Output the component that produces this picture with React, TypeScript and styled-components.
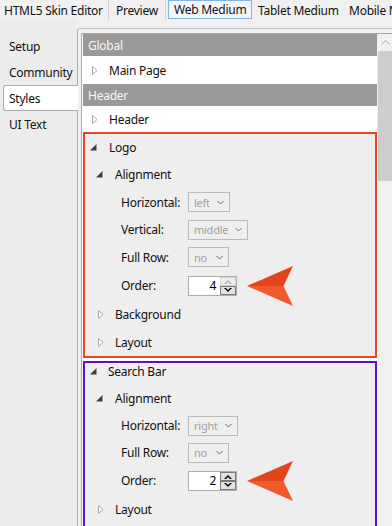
import styled, { createGlobalStyle } from "styled-components";

const GlobalStyle = createGlobalStyle`
  html, body {
    margin: 0;
    padding: 0;
    overflow: hidden;
    background: #f0f0f0;
  }
  body {
    font-family: "Noto Sans", "Open Sans", sans-serif;
    font-size: 12px;
    letter-spacing: -0.25px;
    color: #111;
  }
`;

const Window = styled.div`
    width: 392px;
    height: 526px;
    overflow: hidden;
    display: flex;
    flex-direction: column;
    background: #f0f0f0;
`;

const TopBar = styled.div`
    display: flex;
    height: 20px;
    flex: none;
`;

const TopItem = styled.div<{ $w: number; $pl: number; $sep?: boolean; $active?: boolean }>`
    width: ${(p) => p.$w}px;
    flex: none;
    box-sizing: border-box;
    padding-left: ${(p) => p.$pl}px;
    display: flex;
    align-items: center;
    white-space: nowrap;
    overflow: hidden;
    border-right: ${(p) => (p.$sep ? "1px solid #d2d2d2" : "none")};
    border: ${(p) => (p.$active ? "1px solid #7eb4ea" : undefined)};
    background: ${(p) => (p.$active ? "#f3f7fb" : "transparent")};
    margin-left: ${(p) => (p.$active ? "2px" : "0")};
    height: ${(p) => (p.$active ? "19px" : "20px")};
`;

const Body = styled.div`
    display: flex;
    flex: 1;
    min-height: 0;
`;

const SideTabs = styled.div`
    width: 77px;
    flex: none;
    padding-top: 13px;
    display: flex;
    flex-direction: column;
    background: #ececec;
`;

const SideTab = styled.div<{ $active?: boolean }>`
    height: 26px;
    box-sizing: border-box;
    display: flex;
    align-items: center;
    padding-left: ${(p) => (p.$active ? "5px" : "9px")};
    margin-left: ${(p) => (p.$active ? "3px" : "0")};
    margin-right: ${(p) => (p.$active ? "-1px" : "0")};
    background: ${(p) => (p.$active ? "#fff" : "transparent")};
    border: ${(p) => (p.$active ? "1px solid #acacac" : "none")};
    border-right: none;
    border-radius: 3px 0 0 3px;
    position: relative;
    z-index: 1;
`;

const Frame = styled.div`
    margin-top: 8px;
    flex: 1;
    display: flex;
    border-top: 1px solid #c4c4c4;
    border-left: 1px solid #acacac;
    border-top-left-radius: 3px;
    padding: 4px 0 0 3px;
    background: #f0f0f0;
`;

const List = styled.div`
    display: flex;
    flex: 1;
    border-top: 1px solid #a8a8a8;
    border-left: 1px solid #a8a8a8;
    padding-left: 1px;
    background: #fff;
    overflow: hidden;
`;

const Items = styled.div`
    width: 294px;
    flex: none;
    display: flex;
    flex-direction: column;
    background: #fff;
`;

const GroupHeader = styled.div`
    height: 22px;
    flex: none;
    display: flex;
    align-items: center;
    padding-left: 5px;
    background: #999;
    color: #f7f7f7;
`;

const TreeRow = styled.div<{ $h: number; $tx: number; $pb?: number }>`
    height: ${(p) => p.$h}px;
    flex: none;
    box-sizing: border-box;
    display: flex;
    align-items: center;
    padding-left: ${(p) => p.$tx}px;
    padding-bottom: ${(p) => p.$pb ?? 0}px;
`;

const Twisty = styled.div<{ $w: number }>`
    width: ${(p) => p.$w}px;
    flex: none;
    display: flex;
    align-items: center;
`;

const Box = styled.div<{ $color: string; $mt?: number }>`
    flex: none;
    box-sizing: border-box;
    width: 294px;
    margin-top: ${(p) => p.$mt ?? 0}px;
    border: 2px solid ${(p) => p.$color};
    background: #eeeeee;
    display: flex;
    flex-direction: column;
`;

const PropRow = styled.div<{ $h: number }>`
    height: ${(p) => p.$h}px;
    flex: none;
    display: flex;
    align-items: center;
    padding-left: 36px;
`;

const PropLabel = styled.div`
    width: 67px;
    flex: none;
`;

const Select = styled.div<{ $w: number }>`
    width: ${(p) => p.$w}px;
    height: 20px;
    box-sizing: border-box;
    border: 1px solid #b9b9b9;
    background: #efefef;
    color: #a0a0a0;
    font-size: 11px;
    display: flex;
    align-items: center;
    justify-content: space-between;
    padding: 0 5px 0 5px;
`;

const Spinner = styled.div`
    display: flex;
    height: 20px;
    box-sizing: border-box;
    border: 1px solid #adadad;
`;

const SpinInput = styled.div`
    width: 31px;
    background: #fff;
    display: flex;
    align-items: center;
    justify-content: flex-end;
    padding-right: 4px;
    box-sizing: border-box;
    color: #000;
`;

const SpinButtons = styled.div`
    width: 16px;
    display: flex;
    flex-direction: column;
`;

const SpinBtn = styled.div<{ $disabled?: boolean }>`
    flex: 1;
    box-sizing: border-box;
    display: flex;
    align-items: center;
    justify-content: center;
    background: ${(p) => (p.$disabled ? "#ececec" : "#e2e2e2")};
    border: 1px solid ${(p) => (p.$disabled ? "#d4d4d4" : "#7a7a7a")};
`;

const Scrollbar = styled.div`
    width: 17px;
    flex: none;
    display: flex;
    flex-direction: column;
    background: #f0f0f0;
`;

const ScrollArrow = styled.div`
    height: 17px;
    display: flex;
    align-items: center;
    justify-content: center;
`;

const Thumb = styled.div`
    height: 130px;
    margin: 0 1px;
    background: #cdcdcd;
`;

const Pointer = styled.svg`
    flex: none;
    margin-left: 10px;
`;

function Collapsed() {
    return (
        <svg width="6" height="9" viewBox="0 0 6 9">
            <polygon points="0.5,0.5 5,4.5 0.5,8.5" fill="#fff" stroke="#a8a8a8" />
        </svg>
    );
}

function Expanded() {
    return (
        <svg width="7" height="7" viewBox="0 0 7 7">
            <polygon points="6.5,0 6.5,6.5 0,6.5" fill="#404040" />
        </svg>
    );
}

function Chevron() {
    return (
        <svg width="7" height="5" viewBox="0 0 7 5">
            <polyline points="0.5,1 3.5,4 6.5,1" fill="none" stroke="#6a6a6a" strokeWidth="1" />
        </svg>
    );
}

function SpinArrow(props: { up?: boolean; color: string }) {
    return (
        <svg width="8" height="5" viewBox="0 0 8 5">
            <polygon
                points={props.up ? "0,5 4,1 8,5 6,5 4,3 2,5" : "0,0 4,4 8,0 6,0 4,2 2,0"}
                fill={props.color}
            />
        </svg>
    );
}

function Arrow() {
    return (
        <Pointer width="47" height="40" viewBox="0 0 47 40">
            <polygon points="0,20 46,0 36.5,20" fill="#e3431d" />
            <polygon points="0,20 36.5,20 46,40" fill="#f25a2b" />
        </Pointer>
    );
}

function NumberBox(props: { value: number; upDisabled?: boolean }) {
    return (
        <Spinner>
            <SpinInput>{props.value}</SpinInput>
            <SpinButtons>
                <SpinBtn $disabled={props.upDisabled}>
                    <SpinArrow up color={props.upDisabled ? "#b4b4b4" : "#000"} />
                </SpinBtn>
                <SpinBtn>
                    <SpinArrow color="#000" />
                </SpinBtn>
            </SpinButtons>
        </Spinner>
    );
}

function Combo(props: { w: number; value: string }) {
    return (
        <Select $w={props.w}>
            <span>{props.value}</span>
            <Chevron />
        </Select>
    );
}

export default function App() {
    return (
        <Window>
            <GlobalStyle />
            <TopBar>
                <TopItem $w={109} $pl={4} $sep>HTML5 Skin Editor</TopItem>
                <TopItem $w={57} $pl={7} $sep>Preview</TopItem>
                <TopItem $w={84} $pl={5} $active>Web Medium</TopItem>
                <TopItem $w={91} $pl={6}>Tablet Medium</TopItem>
                <TopItem $w={80} $pl={6}>Mobile Medium</TopItem>
            </TopBar>
            <Body>
                <SideTabs>
                    <SideTab>Setup</SideTab>
                    <SideTab>Community</SideTab>
                    <SideTab $active>Styles</SideTab>
                    <SideTab>UI Text</SideTab>
                </SideTabs>
                <Frame>
                    <List>
                        <Items>
                            <GroupHeader>Global</GroupHeader>
                            <TreeRow $h={28} $tx={9}>
                                <Twisty $w={17}><Collapsed /></Twisty>
                                Main Page
                            </TreeRow>
                            <GroupHeader>Header</GroupHeader>
                            <TreeRow $h={26} $tx={9}>
                                <Twisty $w={17}><Collapsed /></Twisty>
                                Header
                            </TreeRow>
                            <Box $color="#e8461e">
                                <TreeRow $h={27} $tx={5}>
                                    <Twisty $w={19}><Expanded /></Twisty>
                                    Logo
                                </TreeRow>
                                <TreeRow $h={27} $tx={11}>
                                    <Twisty $w={19}><Expanded /></Twisty>
                                    Alignment
                                </TreeRow>
                                <PropRow $h={28}>
                                    <PropLabel>Horizontal:</PropLabel>
                                    <Combo w={42} value="left" />
                                </PropRow>
                                <PropRow $h={27}>
                                    <PropLabel>Vertical:</PropLabel>
                                    <Combo w={60} value="middle" />
                                </PropRow>
                                <PropRow $h={28}>
                                    <PropLabel>Full Row:</PropLabel>
                                    <Combo w={41} value="no" />
                                </PropRow>
                                <PropRow $h={29}>
                                    <PropLabel>Order:</PropLabel>
                                    <NumberBox value={4} upDisabled />
                                    <Arrow />
                                </PropRow>
                                <TreeRow $h={28} $tx={13}>
                                    <Twisty $w={17}><Collapsed /></Twisty>
                                    Background
                                </TreeRow>
                                <TreeRow $h={28} $tx={13}>
                                    <Twisty $w={17}><Collapsed /></Twisty>
                                    Layout
                                </TreeRow>
                            </Box>
                            <Box $color="#5a12c8" $mt={3}>
                                <TreeRow $h={22} $tx={5} $pb={6}>
                                    <Twisty $w={18}><Expanded /></Twisty>
                                    Search Bar
                                </TreeRow>
                                <TreeRow $h={27} $tx={11}>
                                    <Twisty $w={19}><Expanded /></Twisty>
                                    Alignment
                                </TreeRow>
                                <PropRow $h={27}>
                                    <PropLabel>Horizontal:</PropLabel>
                                    <Combo w={50} value="right" />
                                </PropRow>
                                <PropRow $h={27}>
                                    <PropLabel>Full Row:</PropLabel>
                                    <Combo w={41} value="no" />
                                </PropRow>
                                <PropRow $h={29}>
                                    <PropLabel>Order:</PropLabel>
                                    <NumberBox value={2} />
                                    <Arrow />
                                </PropRow>
                                <TreeRow $h={28} $tx={13}>
                                    <Twisty $w={17}><Collapsed /></Twisty>
                                    Layout
                                </TreeRow>
                                <TreeRow $h={28} $tx={13} />
                            </Box>
                        </Items>
                        <Scrollbar>
                            <ScrollArrow>
                                <svg width="9" height="5" viewBox="0 0 9 5">
                                    <polyline points="0.5,4.5 4.5,0.5 8.5,4.5" fill="none" stroke="#a6a6a6" />
                                </svg>
                            </ScrollArrow>
                            <Thumb />
                        </Scrollbar>
                    </List>
                </Frame>
            </Body>
        </Window>
    );
}
